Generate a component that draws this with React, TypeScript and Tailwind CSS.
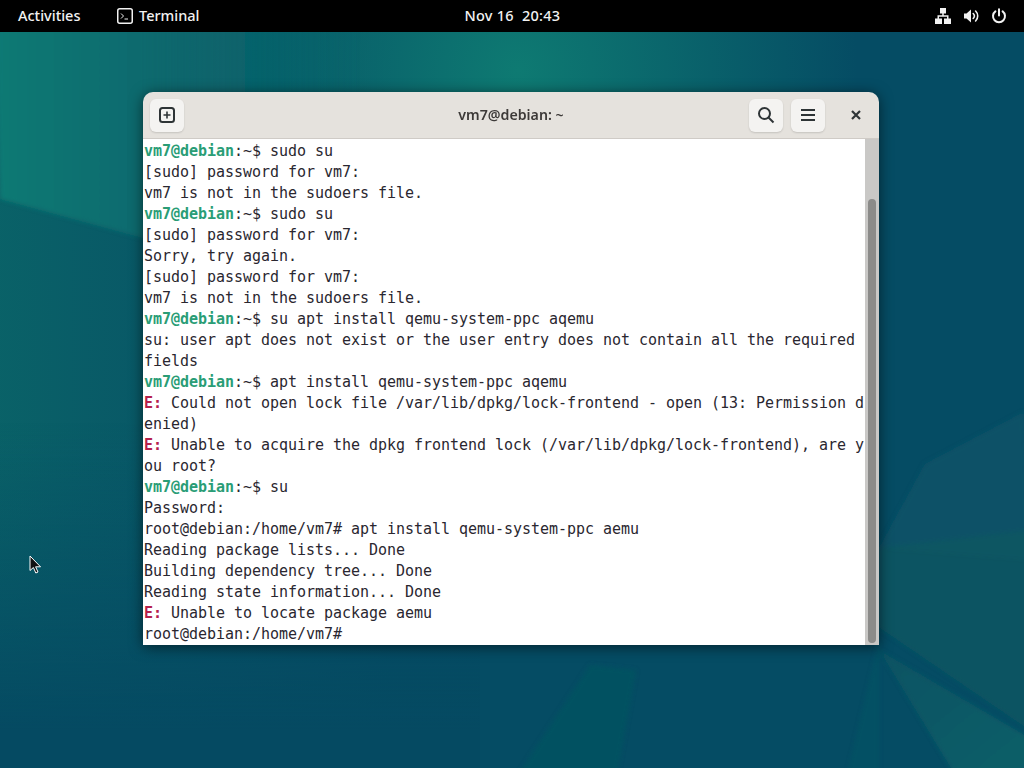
type Line = { prompt?: string; err?: boolean; text: string };

const lines: Line[] = [
    { prompt: 'vm7@debian', text: ':~$ sudo su' },
    { text: '[sudo] password for vm7:' },
    { text: 'vm7 is not in the sudoers file.' },
    { prompt: 'vm7@debian', text: ':~$ sudo su' },
    { text: '[sudo] password for vm7:' },
    { text: 'Sorry, try again.' },
    { text: '[sudo] password for vm7:' },
    { text: 'vm7 is not in the sudoers file.' },
    { prompt: 'vm7@debian', text: ':~$ su apt install qemu-system-ppc aqemu' },
    { text: 'su: user apt does not exist or the user entry does not contain all the required' },
    { text: 'fields' },
    { prompt: 'vm7@debian', text: ':~$ apt install qemu-system-ppc aqemu' },
    { err: true, text: ' Could not open lock file /var/lib/dpkg/lock-frontend - open (13: Permission d' },
    { text: 'enied)' },
    { err: true, text: ' Unable to acquire the dpkg frontend lock (/var/lib/dpkg/lock-frontend), are y' },
    { text: 'ou root?' },
    { prompt: 'vm7@debian', text: ':~$ su' },
    { text: 'Password:' },
    { text: 'root@debian:/home/vm7# apt install qemu-system-ppc aemu' },
    { text: 'Reading package lists... Done' },
    { text: 'Building dependency tree... Done' },
    { text: 'Reading state information... Done' },
    { err: true, text: ' Unable to locate package aemu' },
    { text: 'root@debian:/home/vm7# ' },
];

function Wallpaper() {
    return (
        <svg className="absolute inset-0 w-full h-full" viewBox="0 0 1024 768" preserveAspectRatio="none">
            <defs>
                <linearGradient id="leftFade" x1="0" y1="0" x2="1" y2="0">
                    <stop offset="0" stopColor="#0a6468" stopOpacity="0.9" />
                    <stop offset="0.3" stopColor="#0a5f68" stopOpacity="0.6" />
                    <stop offset="0.7" stopColor="#0a5f68" stopOpacity="0" />
                </linearGradient>
                <linearGradient id="downFade" x1="0" y1="0" x2="0" y2="1">
                    <stop offset="0" stopColor="#054c64" stopOpacity="0" />
                    <stop offset="0.55" stopColor="#054c64" stopOpacity="0" />
                    <stop offset="0.95" stopColor="#054a62" stopOpacity="1" />
                </linearGradient>
                <linearGradient id="cornerTeal" x1="0" y1="0" x2="1" y2="0">
                    <stop offset="0" stopColor="#107a74" />
                    <stop offset="0.3" stopColor="#0d6a6e" />
                    <stop offset="0.75" stopColor="#0c6a6e" stopOpacity="0" />
                </linearGradient>
                <radialGradient id="topGlow" cx="518" cy="70" r="340" gradientUnits="userSpaceOnUse">
                    <stop offset="0" stopColor="#0e7a72" />
                    <stop offset="1" stopColor="#0e7a72" stopOpacity="0" />
                </radialGradient>
                <linearGradient id="rightTeal" x1="0" y1="0" x2="1" y2="1">
                    <stop offset="0" stopColor="#095462" />
                    <stop offset="1" stopColor="#09636a" />
                </linearGradient>
                <filter id="soft">
                    <feGaussianBlur stdDeviation="2" />
                </filter>
            </defs>
            <rect width="1024" height="768" fill="#054c64" />
            <rect width="560" height="768" fill="url(#leftFade)" />
            <rect width="1024" height="768" fill="url(#topGlow)" />
            <g filter="url(#soft)">
                <polygon points="-5,20 480,20 480,320 143,238 0,199" fill="url(#cornerTeal)" />
                <polygon points="925,464 1024,412 1030,560 879,548" fill="#12566a" opacity="0.7" />
                <polygon points="879,548 1030,530 1030,731 879,628" fill="#085662" opacity="0.85" />
                <polygon points="879,650 1030,738 1030,775 955,775" fill="url(#rightTeal)" opacity="0.85" />
                <polygon points="590,665 636,670 617,775 518,775" fill="#085460" opacity="0.7" />
                <polygon points="879,640 847,775 879,775" fill="#095864" opacity="0.4" />
            </g>
            <rect width="480" height="768" fill="url(#downFade)" />
        </svg>
    );
}

function NetworkIcon() {
    return (
        <svg width="16" height="16" viewBox="0 0 16 16" fill="#f2f2f2">
            <rect x="5" y="0" width="6" height="5.5" />
            <rect x="0" y="10.5" width="7" height="5.5" />
            <rect x="9" y="10.5" width="7" height="5.5" />
            <path d="M7.25 5h1.5v2.25H13.5V11H12V8.75H4V11H2.5V7.25h4.75z" />
        </svg>
    );
}

function SpeakerIcon() {
    return (
        <svg width="16" height="16" viewBox="0 0 16 16" fill="none">
            <path d="M1 5.5h2.5L8 1.5v13l-4.5-4H1z" fill="#f2f2f2" />
            <path d="M10.2 5.5a3.6 3.6 0 0 1 0 5" stroke="#f2f2f2" strokeWidth="1.6" strokeLinecap="round" />
            <path d="M12.6 3a7 7 0 0 1 0 10" stroke="#f2f2f2" strokeWidth="1.6" strokeLinecap="round" />
        </svg>
    );
}

function PowerIcon() {
    return (
        <svg width="16" height="16" viewBox="0 0 16 16" fill="none" stroke="#f2f2f2" strokeWidth="2" strokeLinecap="round">
            <path d="M8 1.2v6.3" />
            <path d="M4.4 3.4a6 6 0 1 0 7.2 0" />
        </svg>
    );
}

function HeaderButton({ children }: { children: React.ReactNode }) {
    return (
        <div className="w-[34px] h-[33px] rounded-md bg-[#f4f3f1] shadow-[0_1px_2px_rgba(0,0,0,0.14)] flex items-center justify-center">
            {children}
        </div>
    );
}

export default function App() {
    return (
        <div className="relative w-[1024px] h-[768px] overflow-hidden flex flex-col">
            <Wallpaper />

            {/* Top bar */}
            <div className="relative h-[32px] pb-px bg-black text-[#f2f2f2] flex items-center text-[14.5px] font-medium font-['Noto_Sans',sans-serif]">
                <span className="ml-[18px] w-[63px] whitespace-nowrap">Activities</span>
                <div className="ml-[36px] flex items-center gap-[6px]">
                    <svg width="16" height="16" viewBox="0 0 16 16" fill="none">
                        <rect x="0.75" y="0.75" width="14.5" height="14.5" rx="2" stroke="#f2f2f2" strokeWidth="1.5" />
                        <path d="M4 5.5L6.5 8L4 10.5" stroke="#f2f2f2" strokeWidth="1" />
                        <path d="M7.5 11H11" stroke="#f2f2f2" strokeWidth="1" />
                    </svg>
                    <span>Terminal</span>
                </div>
                <span className="ml-[265px] tracking-[0.25px]">Nov 16&nbsp;&nbsp;20:43</span>
                <div className="ml-auto mr-[17px] flex items-center gap-[12px]">
                    <NetworkIcon />
                    <SpeakerIcon />
                    <PowerIcon />
                </div>
            </div>

            {/* Terminal window */}
            <div className="relative mt-[60px] ml-[143px] w-[736px] h-[553px] rounded-t-[10px] overflow-hidden flex flex-col shadow-[0_2px_14px_rgba(0,0,0,0.55)]">
                <div className="h-[47px] bg-[#e5e2dd] border-b border-[#cfcbc6] flex items-center pl-[7px] pr-[6px]">
                    <HeaderButton>
                        <svg width="16" height="16" viewBox="0 0 16 16" fill="none" stroke="#2e3436">
                            <rect x="1" y="1" width="14" height="14" rx="2.5" strokeWidth="2" />
                            <path d="M8 4.5v7M4.5 8h7" strokeWidth="1.6" />
                        </svg>
                    </HeaderButton>
                    <div className="flex-1 pb-px pl-[89px] text-center text-[14.2px] font-semibold text-[#3d3a38] font-['Noto_Sans',sans-serif]">
                        vm7@debian: ~
                    </div>
                    <div className="flex items-center">
                        <HeaderButton>
                            <svg width="18" height="18" viewBox="0 0 18 18" fill="none" stroke="#2e3436" strokeWidth="2">
                                <circle cx="7.5" cy="7.5" r="5.5" />
                                <path d="M11.5 11.5L16.5 16.5" />
                            </svg>
                        </HeaderButton>
                        <div className="ml-[8px]">
                            <HeaderButton>
                                <svg width="16" height="16" viewBox="0 0 16 16" fill="#2e3436">
                                    <rect x="1" y="2" width="14" height="2" />
                                    <rect x="1" y="7" width="14" height="2" />
                                    <rect x="1" y="12" width="14" height="2" />
                                </svg>
                            </HeaderButton>
                        </div>
                        <div className="ml-[14px] w-[34px] h-[32px] flex items-center justify-center">
                            <svg width="10" height="10" viewBox="0 0 10 10" stroke="#2e3436" strokeWidth="2.2">
                                <path d="M1 1l8 8M9 1l-8 8" />
                            </svg>
                        </div>
                    </div>
                </div>
                <div className="flex-1 flex bg-white">
                    <div className="w-[722px] pl-px pt-[2px] font-['DejaVu_Sans_Mono',monospace] text-[15px] leading-[21px] tracking-[-0.03px] text-[#2a2730] whitespace-pre">
                        {lines.map((line, i) => (
                            <div key={i} className="h-[21px]">
                                {line.prompt && <span className="font-bold text-[#2a9d76]">{line.prompt}</span>}
                                {line.err && <span className="font-bold text-[#b5214c]">E:</span>}
                                {line.text}
                            </div>
                        ))}
                    </div>
                    <div className="w-[14px] bg-[#c9c8c6] flex flex-col px-[3px] pt-[60px] pb-[2px]">
                        <div className="flex-1 rounded-full bg-[#8b8b89]" />
                    </div>
                </div>
            </div>

            {/* Mouse pointer */}
            <svg className="absolute left-[29px] top-[555px]" width="14" height="20" viewBox="0 0 14 20">
                <path d="M1 1v14.5l3.4-3 2.4 5.5 2.2-1-2.4-5.2H11.5z" fill="#111" stroke="#fff" strokeWidth="1" />
            </svg>
        </div>
    );
}
